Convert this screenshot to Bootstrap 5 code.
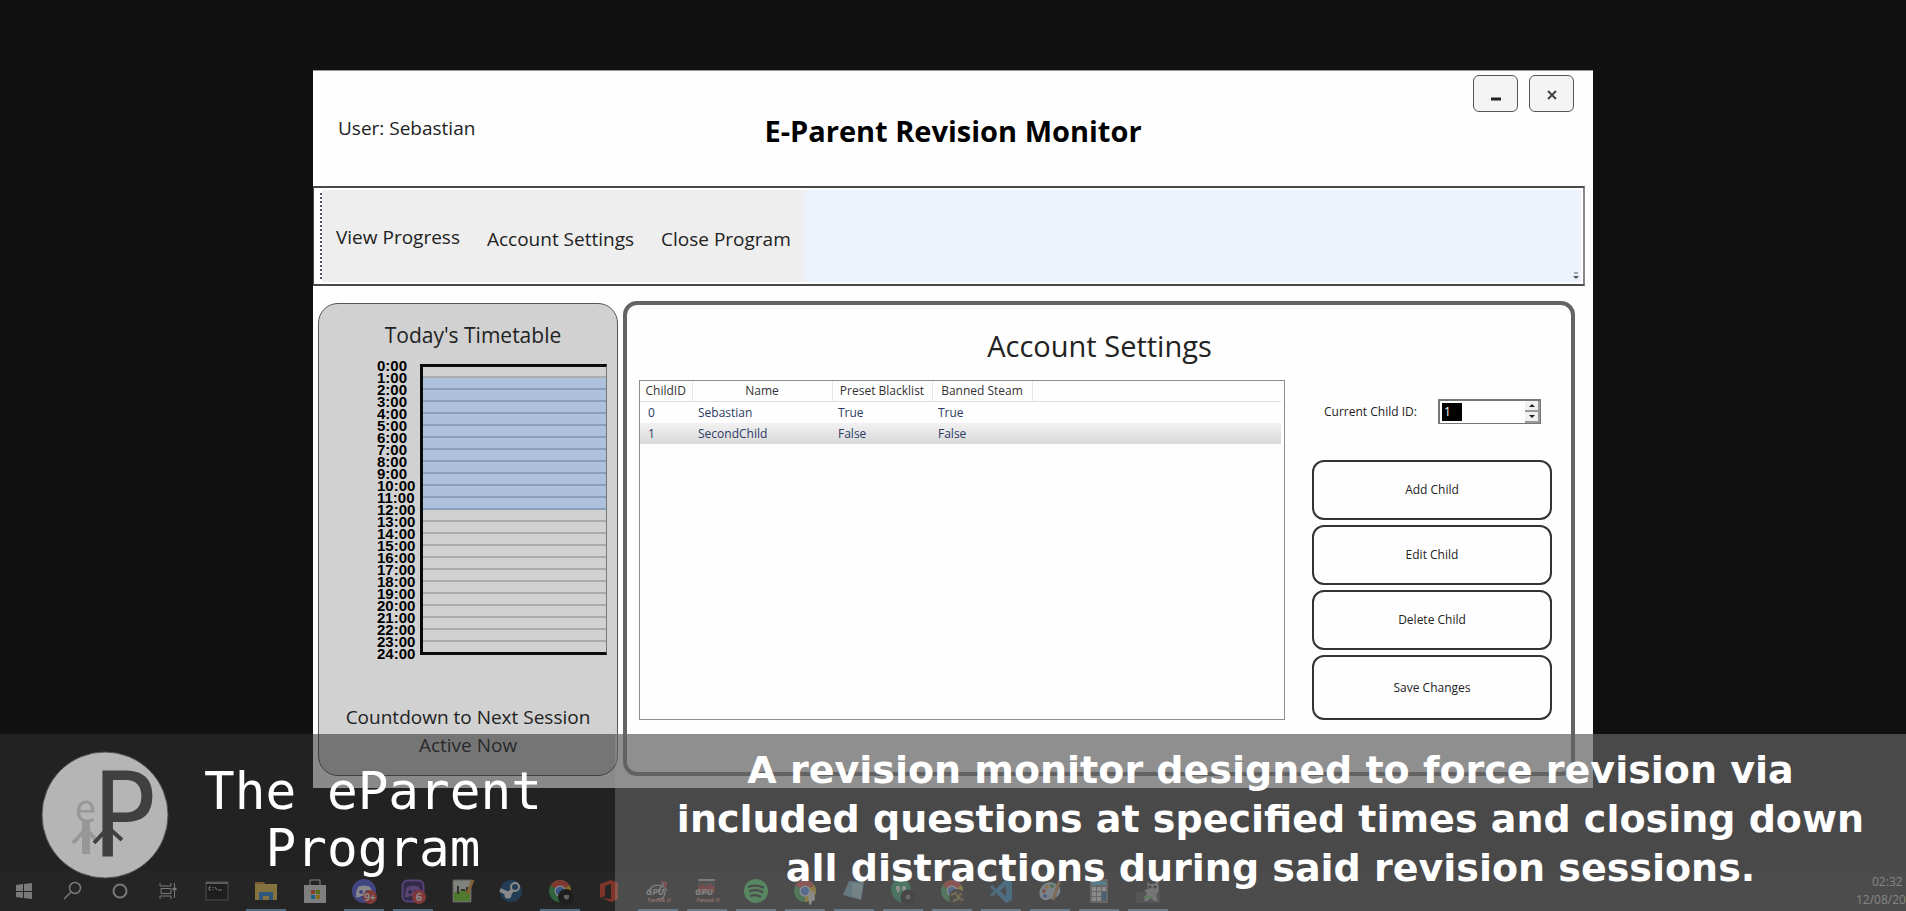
<!DOCTYPE html>
<html lang="en">
<head>
<meta charset="utf-8">
<meta name="viewport" content="width=device-width, initial-scale=1">
<title>The eParent Program</title>
<link href="https://cdn.jsdelivr.net/npm/bootstrap@5.3.0/dist/css/bootstrap.min.css" rel="stylesheet">
<style>
  body { background: #111; font-family: "Open Sans", "Noto Sans", sans-serif; color: #222; overflow-x: hidden; }
  .desktop { min-height: 100vh; }
  .desk-label { position: absolute; left: 26px; top: -12px; font-size: 12px; line-height: 16px; color: #fff; }
  .stage { padding-top: 70px; }

  /* application window */
  .app-window { width: 100%; max-width: 1280px; background: #fefefe; border-top: 1px solid #999; padding-bottom: 12px; }
  .app-head { display: grid; grid-template-columns: 1fr auto 1fr; height: 115px; padding: 4px 19px 0 19px; }
  .head-btns { gap: 11px; }
  .fs-ui { font-size: 19px; line-height: 28px; }
  .user-name { padding: 0 0 6px 6px; }
  .app-title { font-size: 29px; line-height: 36px; font-weight: 700; color: #000; }
  .win-btn { width: 45px; height: 37px; border: 1px solid #555; border-radius: 6px; background: #f4f4f4; padding: 0; }
  .tool-strip { height: 100px; margin-right: 8px; border: 2px solid #484848; border-left-width: 1px; border-right-color: #888; background: #fff; padding: 2px 2px 2px 6px; }
  .grip { border-left: 2px dotted #556; margin: 3px 0; }
  .tool-group { background: #eee; width: 482px; padding: 6px 0 0 14px; gap: 27px; }
  .tool-rest { background: #ecf3fd; padding: 2px; }
  .tool-link { color: #222; text-decoration: none; }

  .panels { margin: 15px 18px 0 5px; gap: 5px; }
  .timetable { width: 300px; flex: none; background: #d1d1d1; border: 1px solid #555; border-radius: 20px; padding: 14px 10px 16px; margin-top: 2px; }
  .panel-title { font-size: 21px; line-height: 34px; padding-left: 10px; }
  .chart-box { margin: 8px 0 0 48px; gap: 6px; }
  .hours { list-style: none; width: 37px; padding: 0; margin: 0; font: 700 15px/12px "Liberation Sans", sans-serif; color: #000; height: 300px; }
  .slots { flex: 1; margin: 4px 0; height: 291px; border: 3px solid #0a0a0a; border-right: 1px solid #777; }
  .slots div { height: 12px; border-bottom: 2px solid #aaabac; }
  .slots div:first-child { height: 11px; }
  .slots div:last-child { border: 0; height: 10px; }
  .slots .busy { background: #adc1dc; border-color: #8ca0bd; }

  .settings { border: 4px solid #646464; border-radius: 14px; height: 475px; padding: 20px 19px 52px 12px; }
  .settings h2 { font-size: 29px; line-height: 42px; margin: 0 0 13px; padding-left: 8px; }
  .list-box { width: 646px; border: 1px solid #8a8f96; height: 340px; padding: 0 3px 0 0; }
  .child-list { width: 100%; table-layout: fixed; font-size: 12px; line-height: 17px; border-collapse: collapse; }
  .col-id { width: 52px; }
  .col-name { width: 140px; }
  .col-flag { width: 100px; }
  .child-list th { font-weight: 400; text-align: center; color: #333; padding: 1px 4px; height: 20px; border-bottom: 1px solid #ddd; border-right: 1px solid #e6e6e6; white-space: nowrap; }
  .child-list th:last-child { border-right: 0; }
  .child-list td { padding: 2px 6px; height: 21px; color: #2c3a66; }
  .child-list td:first-child { padding-left: 8px; }
  .child-list .chosen { background: linear-gradient(#f2f2f2, #d9d9d9); }
  .side-col { width: 240px; }
  .fs-side { font-size: 12px; line-height: 18px; }
  .id-row { margin: 19px 11px 0 12px; }
  .spin { width: 103px; height: 25px; border: 1px solid #777; border-width: 2px 1px 1px 2px; background: #fff; }
  .spin input { width: 20px; border: 0; padding: 0 2px; margin: 2px; background: #000; color: #fff; font-size: 12px; }
  .spin button { width: 15px; height: 11px; padding: 0; border: 1px solid #999; border-width: 0 2px 2px 0; background: #f0f0f0; display: flex; align-items: center; justify-content: center; }
  .act-btn { height: 60px; border: 2px solid #333; border-radius: 12px; background: #fefefe; color: #222; padding: 0; }
  .act-btn:last-child { height: 65px; }
  .act-list { gap: 5px; margin-top: 36px; }

  /* taskbar */
  .taskbar { height: 40px; position: absolute; left: 0; right: 0; bottom: 0; background: #181818; overflow: hidden; }
  .tb { width: 49px; height: 40px; flex: none; border: 0; padding: 0; background: none; position: relative; }
  .tb.sys { width: 48px; }
  .tb svg { width: 24px; height: 24px; display: block; margin: 0 auto; overflow: visible; }
  .tb.on::after { content: ""; position: absolute; left: 5px; right: 4px; bottom: 0; height: 2px; background: #76b9ed; }
  .clock { font-size: 12px; line-height: 18px; color: #ddd; width: 50px; padding-top: 2px; }

  /* caption band over the screen */
  .caption-band { position: absolute; left: 0; right: 0; bottom: 0; height: 177px; color: #fff; }
  .brand { width: 615px; background: rgba(47,47,47,.57); padding-left: 41px; }
  .brand svg { width: 128px; height: 128px; margin-top: 17px; flex: none; }
  .brand-name { font: 400 51px/57px "DejaVu Sans Mono", monospace; width: 340px; margin: 29px 0 0 34px; text-align: center; }
  .blurb { background: rgba(97,97,97,.71); font: 700 38px/49px "DejaVu Sans", sans-serif; padding: 12px 0 0 20px; text-align: center; white-space: nowrap; }
</style>
</head>
<body>
<div class="desktop position-relative overflow-hidden">
  <span class="desk-label">Non</span>

  <main class="stage">
    <div class="app-window mx-auto">
      <header class="app-head">
        <div class="fs-ui user-name align-self-center">User: Sebastian</div>
        <h1 class="app-title mb-0 align-self-center">E-Parent Revision Monitor</h1>
        <div class="head-btns d-flex justify-content-end align-items-start">
          <button class="win-btn" aria-label="Minimise"><svg width="12" height="12" viewBox="0 0 12 12"><path d="M1 10h10" stroke="#222" stroke-width="3"/></svg></button>
          <button class="win-btn" aria-label="Close"><svg width="10" height="10" viewBox="0 0 10 10"><path d="M1 1l8 8M9 1l-8 8" stroke="#444" stroke-width="2"/></svg></button>
        </div>
      </header>

      <nav class="tool-strip d-flex">
        <div class="grip"></div>
        <div class="tool-group d-flex align-items-center fs-ui">
          <a class="tool-link pb-1" href="#">View Progress</a>
          <a class="tool-link" href="#">Account Settings</a>
          <a class="tool-link" href="#">Close Program</a>
        </div>
        <div class="tool-rest flex-grow-1 d-flex justify-content-end align-items-end">
          <svg width="6" height="8" viewBox="0 0 6 8"><path d="M1 1h4" stroke="#555"/><path d="M0 4h6L3 7z" fill="#555"/></svg>
        </div>
      </nav>

      <div class="panels d-flex">
        <section class="timetable d-flex flex-column text-center">
          <h2 class="panel-title fw-normal mb-0">Today's Timetable</h2>
          <div class="chart-box d-flex">
            <ol class="hours text-start">
              <li>0:00</li><li>1:00</li><li>2:00</li><li>3:00</li><li>4:00</li><li>5:00</li><li>6:00</li><li>7:00</li><li>8:00</li><li>9:00</li><li>10:00</li><li>11:00</li><li>12:00</li><li>13:00</li><li>14:00</li><li>15:00</li><li>16:00</li><li>17:00</li><li>18:00</li><li>19:00</li><li>20:00</li><li>21:00</li><li>22:00</li><li>23:00</li><li>24:00</li>
            </ol>
            <div class="slots">
              <div></div><div class="busy"></div><div class="busy"></div><div class="busy"></div><div class="busy"></div><div class="busy"></div><div class="busy"></div><div class="busy"></div><div class="busy"></div><div class="busy"></div><div class="busy"></div><div class="busy"></div><div></div><div></div><div></div><div></div><div></div><div></div><div></div><div></div><div></div><div></div><div></div><div></div>
            </div>
          </div>
          <p class="fs-ui mb-0 mt-auto">Countdown to Next Session<br>Active Now</p>
        </section>

        <section class="settings flex-grow-1">
          <h2 class="fw-normal text-center">Account Settings</h2>
          <div class="d-flex justify-content-between">
            <div class="list-box">
              <table class="child-list">
                <colgroup><col class="col-id"><col class="col-name"><col class="col-flag"><col class="col-flag"><col></colgroup>
                <thead><tr><th>ChildID</th><th>Name</th><th>Preset Blacklist</th><th>Banned Steam</th><th></th></tr></thead>
                <tbody>
                  <tr><td>0</td><td>Sebastian</td><td>True</td><td>True</td><td></td></tr>
                  <tr class="chosen"><td>1</td><td>SecondChild</td><td>False</td><td>False</td><td></td></tr>
                </tbody>
              </table>
            </div>
            <div class="side-col">
              <div class="id-row d-flex justify-content-between align-items-center">
                <label class="fs-side" for="childId">Current Child ID:</label>
                <div class="spin d-flex justify-content-between">
                  <input id="childId" type="text" value="1">
                  <div class="d-flex flex-column">
                    <button aria-label="Up"><svg width="6" height="3"><path d="M0 3h6L3 0z" fill="#222"/></svg></button>
                    <button aria-label="Down"><svg width="6" height="3"><path d="M0 0h6L3 3z" fill="#222"/></svg></button>
                  </div>
                </div>
              </div>
              <div class="act-list d-flex flex-column fs-side">
                <button class="act-btn">Add Child</button>
                <button class="act-btn">Edit Child</button>
                <button class="act-btn">Delete Child</button>
                <button class="act-btn">Save Changes</button>
              </div>
            </div>
          </div>
        </section>
      </div>
    </div>
  </main>

  <svg width="0" height="0" class="position-absolute">
    <defs>
      <g id="chrome"><circle cx="12" cy="12" r="11" fill="#34a853"/><path d="M12 12L2.500 6.500A11 11 0 0 1 21.500 6.500z" fill="#ea4335"/><path d="M12 12L21.500 6.500A11 11 0 0 1 12 23z" fill="#fbbc05"/><circle cx="12" cy="12" r="5.500" fill="#fff"/><circle cx="12" cy="12" r="4.300" fill="#4285f4"/></g>
      <path id="pad" d="M6 8q6-3 12 0 3 5 2 10-3 1-5-1H9q-2 2-5 1Q4 12 6 8zm3 3a2 2 0 1 0 .1 0zm6 0a2 2 0 1 0 .1 0z" fill-rule="evenodd"/>
    </defs>
  </svg>

  <footer class="taskbar d-flex">
    <button class="tb sys" aria-label="Start"><svg viewBox="0 0 24 24"><path d="M4 6l7-1v7H4zm8-1l8-1v8h-8zM4 13h7v6l-7-1zm8 0h8v7l-8-1z" fill="#ddd"/></svg></button>
    <button class="tb sys" aria-label="Search"><svg viewBox="0 0 24 24" fill="none" stroke="#ddd" stroke-width="1.500"><circle cx="15" cy="9" r="5.500"/><path d="M11 13l-7 7"/></svg></button>
    <button class="tb sys" aria-label="Cortana"><svg viewBox="0 0 24 24"><circle cx="12" cy="12" r="6.500" fill="none" stroke="#ddd" stroke-width="2"/></svg></button>
    <button class="tb sys" aria-label="Task view"><svg viewBox="0 0 24 24" fill="none" stroke="#ddd"><path d="M4 4v3h11V4M4 20v-3h11v3M5 9.500h10v5H5zM18.500 4v4m0 4v7"/><path d="M17 9h3v2h-3z" fill="#ddd"/></svg></button>
    <button class="tb" aria-label="Command Prompt"><svg viewBox="0 0 24 24"><path d="M1 3h22v18H1z" fill="#080808" stroke="#777"/><path d="M1 3h22v2H1z" fill="#999"/><path d="M6 8H4v3h2m2-3v1m0 1v1m2-3l2 3m1 0h4" stroke="#ddd" fill="none"/></svg></button>
    <button class="tb on" aria-label="File Explorer"><svg viewBox="0 0 24 24"><path d="M1 3h9l2 3H1z" fill="#e09030"/><path d="M1 5h22v16H1z" fill="#f4cd55"/><path d="M5 21v-8h14v8h-4v-4H9v4z" fill="#2e8fe0"/></svg></button>
    <button class="tb" aria-label="Store"><svg viewBox="0 0 24 24"><path d="M7 6V1h10v5" fill="none" stroke="#eee"/><path d="M1 6h22v18H1z" fill="#e8e8e8"/><path d="M8 11h4v4H8z" fill="#f25022"/><path d="M13 11h4v4h-4z" fill="#7fba00"/><path d="M8 16h4v4H8z" fill="#00a4ef"/><path d="M13 16h4v4h-4z" fill="#ffb900"/></svg></button>
    <button class="tb on" aria-label="Discord"><svg viewBox="0 0 24 24"><circle cx="12" cy="12" r="12" fill="#5865f2"/><use href="#pad" fill="#fff"/><circle cx="18" cy="18" r="7" fill="#ea4545"/><text x="18" y="22" font-size="10" font-weight="700" text-anchor="middle" fill="#fff">9+</text></svg></button>
    <button class="tb on" aria-label="Discord Canary"><svg viewBox="0 0 24 24"><rect x="1.500" y="1.500" width="21" height="21" rx="5" fill="#35246b" stroke="#8a5bd8" stroke-width="2"/><use href="#pad" fill="#9560c8"/><circle cx="18" cy="18" r="7" fill="#ea4545"/><text x="18" y="22" font-size="11" font-weight="700" text-anchor="middle" fill="#fff">6</text></svg></button>
    <button class="tb" aria-label="Editor"><svg viewBox="0 0 24 24"><path d="M3 1h18v22H3z" fill="#e8f0e0" stroke="#999"/><path d="M4 13l16-3v12H4z" fill="#77d930"/><path d="M8 7v8m3-4h4m2-3v5" stroke="#333" stroke-width="2"/><path d="M23 1l-6 14" stroke="#f0a030" stroke-width="3"/></svg></button>
    <button class="tb" aria-label="Steam"><svg viewBox="0 0 24 24"><circle cx="12" cy="12" r="11" fill="#17508a"/><path d="M1 11l9 4 6-7" stroke="#fff" stroke-width="4" fill="none"/><circle cx="16" cy="8" r="4" fill="#17508a" stroke="#fff" stroke-width="2"/><circle cx="9" cy="16" r="3.500" fill="#fff"/></svg></button>
    <button class="tb on" aria-label="Chrome"><svg viewBox="0 0 24 24"><use href="#chrome"/><circle cx="18" cy="18" r="8" fill="#080808"/><path d="M16 16h5v3l-2.500 2-2.500-2z" fill="#aaa"/></svg></button>
    <button class="tb" aria-label="Office"><svg viewBox="0 0 24 24"><path d="M3 5l11-4 7 3v16l-7 3-9-4 9 1V5L8 7v10l-5 2z" fill="#ea3e23"/></svg></button>
    <button class="tb on" aria-label="GPU Tweak"><svg viewBox="0 0 24 24"><path d="M3 12a10 10 0 0 1 18 0M12 12l6-8M17 10a6 6 0 0 1-6 10" fill="none" stroke="#bbb" stroke-width="1.500"/><path d="M15 3l5 1-1 5" stroke="#e33" fill="none" stroke-width="2"/><text x="0" y="16" font-size="9" font-style="italic" font-weight="700" fill="#ddd">GPU</text><text x="1" y="23" font-size="6" font-style="italic" font-weight="700" fill="#e88">Tweak II</text></svg></button>
    <button class="tb on" aria-label="GPU Tweak monitor"><svg viewBox="0 0 24 24"><path d="M3 0h17v16H3z" fill="#333"/><path d="M3 1h17" stroke="#bbb" stroke-width="2"/><path d="M3 8l4-3 4 3 4-4 5 4v5H3z" fill="#a22"/><text x="0" y="16" font-size="9" font-style="italic" font-weight="700" fill="#ddd">GPU</text><text x="1" y="23" font-size="6" font-style="italic" font-weight="700" fill="#e88">Tweak II</text></svg></button>
    <button class="tb on" aria-label="Spotify"><svg viewBox="0 0 24 24"><circle cx="12" cy="12" r="12" fill="#40e060"/><path d="M4 8q9-3 16 1M5 12.500q8-3 14 1M6 17q7-2 11 1" stroke="#181818" stroke-width="2.200" fill="none"/></svg></button>
    <button class="tb on" aria-label="Chrome, second profile"><svg viewBox="0 0 24 24"><use href="#chrome"/><path d="M15 13l6-1 1 9-3 1-1 4-2-1z" fill="#eee"/></svg></button>
    <button class="tb on" aria-label="Notepad"><svg viewBox="0 0 24 24"><path d="M7 2l15 1-3 18L1 16z" fill="#6fb0c8"/><path d="M10 4l11 1-2 15L10 17z" fill="#a8d4e0"/></svg></button>
    <button class="tb on" aria-label="Hangouts"><svg viewBox="0 0 24 24"><path d="M10 0a10 10 0 0 1 0 20v4Q0 19 0 10A10 10 0 0 1 10 0z" fill="#16a765"/><path d="M5 7h4v5l-3 2v-3H5zm6 0h4v5l-3 2v-3h-1z" fill="#fff"/><circle cx="17" cy="18" r="7.500" fill="#080808"/><circle cx="17" cy="18" r="2.500" fill="#777"/></svg></button>
    <button class="tb on" aria-label="Chrome, third profile"><svg viewBox="0 0 24 24"><use href="#chrome"/><circle cx="17" cy="18" r="8" fill="#2c2517"/><path d="M11 16l5-2 2 5 5 2M13 22l5-2 3-6" stroke="#a58b48" stroke-width="2" fill="none"/></svg></button>
    <button class="tb on" aria-label="Code"><svg viewBox="0 0 24 24"><path d="M17 0l6 3v18l-6 3L7 14l-4 4-2-2 4-4-4-4 2-2 4 4zm0 7l-6 5 6 5z" fill="#2489ca" fill-rule="evenodd"/></svg></button>
    <button class="tb on" aria-label="Paint"><svg viewBox="0 0 24 24"><path d="M12 3C3 4-1 13 3 19q4 4 8 1 8 0 11-6 2-9-10-11z" fill="#b8d4e8"/><circle cx="6" cy="12" r="2" fill="#c33"/><circle cx="9" cy="8" r="2" fill="#e90"/><circle cx="14" cy="7" r="2" fill="#393"/><circle cx="7" cy="17" r="2" fill="#36c"/><path d="M22 0l-7 21" stroke="#c77f3a" stroke-width="3"/></svg></button>
    <button class="tb on" aria-label="Calculator"><svg viewBox="0 0 24 24"><path d="M3 0h18v24H3z" fill="#777"/><path d="M5 2h14v4H5z" fill="#40c8f0"/><path d="M5 8h4v4H5zm5 0h4v4h-4zm5 0h4v4h-4zM5 13h4v4H5zm5 0h4v4h-4zM5 18h4v4H5zm5 0h4v4h-4z" fill="#eee"/><path d="M15 13h4v9h-4z" fill="#235a9c"/></svg></button>
    <button class="tb on" aria-label="Game"><svg viewBox="0 0 24 24"><path d="M0 13h24v11H0z" fill="#3a3a3a"/><path d="M11 3l3 2h4l4-3 1 10-3 4 2 6h-4l-3-3-4 3H8l3-8-3-3 4-1z" fill="#aaa"/><circle cx="14" cy="8" r="1.500"/><circle cx="19" cy="8" r="1.500"/><path d="M8 18h8" stroke="#5b5" stroke-width="2"/></svg></button>
    <div class="clock ms-auto flex-shrink-0 text-nowrap"><div class="ps-3">02:32</div><div>12/08/2021</div></div>
  </footer>

  <div class="caption-band d-flex">
    <div class="brand d-flex flex-shrink-0">
      <svg viewBox="0 0 128 128" role="img" aria-label="eParent logo">
        <circle cx="64" cy="64" r="63" fill="#b5b5b5" stroke="#555"/>
        <g fill="#979797" stroke="#979797"><text x="34" y="71" font-family="DejaVu Sans Condensed, DejaVu Sans" font-size="38" stroke="none">e</text><path d="M41 70h8v33h-8z" stroke="none"/><path d="M43 80L32 92M47 80l9 10" stroke-width="4"/></g>
        <g fill="#404040" stroke="#404040"><text x="51" y="106" font-family="DejaVu Sans Condensed, DejaVu Sans" font-size="118" stroke="none">P</text><path d="M65 79L53 92M70 79l11 10" stroke-width="4"/></g>
      </svg>
      <div class="brand-name">The eParent Program</div>
    </div>
    <p class="blurb flex-grow-1 mb-0">A revision monitor designed to force revision via<br>included questions at specified times and closing down<br>all distractions during said revision sessions.</p>
  </div>
</div>
<script src="https://cdn.jsdelivr.net/npm/bootstrap@5.3.0/dist/js/bootstrap.bundle.min.js"></script>
</body>
</html>
